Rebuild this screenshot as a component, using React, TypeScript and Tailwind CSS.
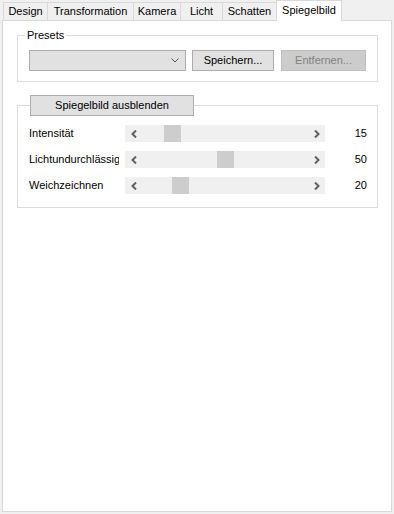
import React from 'react';

const tabs = [
  { label: 'Design', width: 'w-[45px]' },
  { label: 'Transformation', width: 'w-[87px]' },
  { label: 'Kamera', width: 'w-[48px]' },
  { label: 'Licht', width: 'w-[43px]' },
  { label: 'Schatten', width: 'w-[55px]' },
];

const sliders = [
  { label: 'Intensität', value: 15 },
  { label: 'Lichtundurchlässigkeit', value: 50 },
  { label: 'Weichzeichnen', value: 20 },
];

function Chevron({ dir }: { dir: 'left' | 'right' }) {
  return (
    <svg width="6" height="8" viewBox="0 0 6 8" className="shrink-0">
      <path
        d={dir === 'left' ? 'M5 0.5 L1.5 4 L5 7.5' : 'M1 0.5 L4.5 4 L1 7.5'}
        fill="none"
        stroke="#606060"
        strokeWidth="2"
      />
    </svg>
  );
}

function Slider({ value }: { value: number }) {
  return (
    <div className="relative flex items-center justify-between w-[200px] h-[17px] bg-[#f0f0f0]">
      <div className="w-[17px] h-[17px] flex items-center justify-center">
        <Chevron dir="left" />
      </div>
      <div className="w-[17px] h-[17px] flex items-center justify-center">
        <Chevron dir="right" />
      </div>
      <div
        className="absolute top-0 w-[17px] h-[17px] bg-[#cdcdcd]"
        style={{ left: Math.round(17 + value * 1.49) }}
      />
    </div>
  );
}

export default function App() {
  return (
    <div className="w-[394px] h-[514px] bg-[#f0f0f0] flex flex-col font-['Liberation_Sans',Arial,sans-serif] text-[11px] text-black">
      {/* tab strip */}
      <div className="flex items-end h-[20px] pl-[3px]">
        {tabs.map((t, i) => (
          <div
            key={t.label}
            className={`${t.width} h-[18px] ${i > 0 ? '-ml-px' : ''} border border-b-0 border-[#d9d9d9] bg-[#f0f0f0] flex items-center justify-center leading-none whitespace-nowrap`}
          >
            {t.label}
          </div>
        ))}
        <div className="relative z-10 -ml-px -mb-px w-[66px] h-[21px] border border-b-0 border-[#d9d9d9] bg-white flex items-center justify-center leading-none pb-[2px]">
          Spiegelbild
        </div>
      </div>

      {/* tab panel */}
      <div className="ml-[2px] w-[390px] h-[492px] bg-white border border-[#d9d9d9] pl-[14px]">
        {/* Presets */}
        <div className="relative mt-[14px] w-[361px] border border-[#dcdcdc] pt-[14px] pb-[10px] pl-[11px] flex items-center">
          <span className="absolute left-[7px] top-[-8px] px-[2px] bg-white leading-[14px]">Presets</span>
          <div className="w-[157px] h-[21px] bg-[#e1e1e1] border border-[#adadad] flex items-center justify-end pr-[6px]">
            <svg width="8" height="5" viewBox="0 0 8 5">
              <path d="M0.5 0.5 L4 4 L7.5 0.5" fill="none" stroke="#555" strokeWidth="1" />
            </svg>
          </div>
          <button className="ml-[6px] w-[82px] h-[21px] bg-[#e1e1e1] border border-[#adadad] leading-none">
            Speichern...
          </button>
          <button disabled className="ml-[7px] w-[85px] h-[21px] bg-[#cccccc] border border-[#bfbfbf] text-[#838383] leading-none">
            Entfernen...
          </button>
        </div>

        {/* Spiegelbild */}
        <div className="mt-[23px] w-[361px] border border-[#dcdcdc] pb-[13px] flex flex-col">
          <button className="-mt-[11px] ml-[12px] w-[164px] h-[21px] bg-[#e1e1e1] border border-[#adadad] leading-none">
            Spiegelbild ausblenden
          </button>
          <div className="mt-[9px] flex flex-col gap-[9px]">
            {sliders.map((s) => (
              <div key={s.label} className="flex items-center h-[17px] pl-[11px]">
                <div className="w-[90px] overflow-hidden whitespace-nowrap leading-none">{s.label}</div>
                <div className="ml-[6px]">
                  <Slider value={s.value} />
                </div>
                <div className="w-[42px] text-right leading-none">{s.value}</div>
              </div>
            ))}
          </div>
        </div>
      </div>
    </div>
  );
}
